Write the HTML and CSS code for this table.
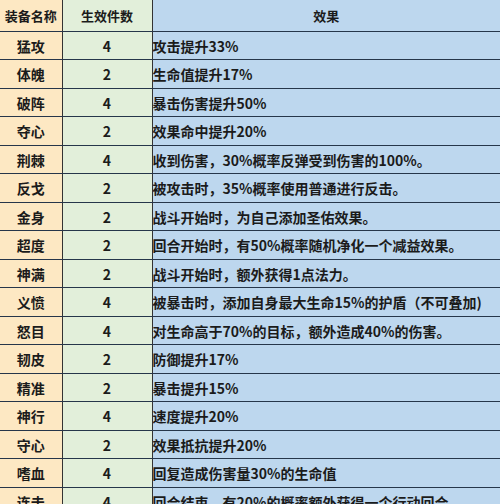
FILE: index.html
```html
<!DOCTYPE html>
<html lang="zh">
<head>
<meta charset="utf-8">
<link rel="stylesheet" href="styles.css">
</head>
<body>
<table class="gear">
  <colgroup><col class="c-name"><col class="c-num"><col class="c-eff"></colgroup>
  <thead>
    <tr><th class="name">装备名称</th><th class="num">生效件数</th><th class="eff">效果</th></tr>
  </thead>
  <tbody>
    <tr><td class="name">猛攻</td><td class="num">4</td><td class="eff">攻击提升33%</td></tr>
    <tr><td class="name">体魄</td><td class="num">2</td><td class="eff">生命值提升17%</td></tr>
    <tr><td class="name">破阵</td><td class="num">4</td><td class="eff">暴击伤害提升50%</td></tr>
    <tr><td class="name">夺心</td><td class="num">2</td><td class="eff">效果命中提升20%</td></tr>
    <tr><td class="name">荆棘</td><td class="num">4</td><td class="eff">收到伤害，30%概率反弹受到伤害的100%。</td></tr>
    <tr><td class="name">反戈</td><td class="num">2</td><td class="eff">被攻击时，35%概率使用普通进行反击。</td></tr>
    <tr><td class="name">金身</td><td class="num">2</td><td class="eff">战斗开始时，为自己添加圣佑效果。</td></tr>
    <tr><td class="name">超度</td><td class="num">2</td><td class="eff">回合开始时，有50%概率随机净化一个减益效果。</td></tr>
    <tr><td class="name">神满</td><td class="num">2</td><td class="eff">战斗开始时，额外获得1点法力。</td></tr>
    <tr><td class="name">义愤</td><td class="num">4</td><td class="eff">被暴击时，添加自身最大生命15%的护盾（不可叠加)</td></tr>
    <tr><td class="name">怒目</td><td class="num">4</td><td class="eff">对生命高于70%的目标，额外造成40%的伤害。</td></tr>
    <tr><td class="name">韧皮</td><td class="num">2</td><td class="eff">防御提升17%</td></tr>
    <tr><td class="name">精准</td><td class="num">2</td><td class="eff">暴击提升15%</td></tr>
    <tr><td class="name">神行</td><td class="num">4</td><td class="eff">速度提升20%</td></tr>
    <tr><td class="name">守心</td><td class="num">2</td><td class="eff">效果抵抗提升20%</td></tr>
    <tr><td class="name">嗜血</td><td class="num">4</td><td class="eff">回复造成伤害量30%的生命值</td></tr>
    <tr><td class="name">连击</td><td class="num">4</td><td class="eff">回合结束，有20%的概率额外获得一个行动回合。</td></tr>
  </tbody>
</table>
</body>
</html>
```
FILE: styles.css
```css
html, body {
  margin: 0;
  padding: 0;
  background: #ffffff;
  overflow: hidden;
}
.gear {
  width: 500px;
  table-layout: fixed;
  border-collapse: collapse;
  font-family: "Microsoft YaHei", "Noto Sans CJK SC", "Noto Sans", sans-serif;
  font-weight: bold;
  font-size: 14px;
  color: #1b1b1b;
}
.c-name { width: 62px; }
.c-num { width: 90px; }
.c-eff { width: 348px; }
.gear th, .gear td {
  padding: 0;
  height: 27px;
  line-height: 18px;
  border-bottom: 1px solid #26364a;
  border-right: 1px solid #333333;
  white-space: nowrap;
  overflow: hidden;
}
.gear th {
  height: 31px;
  font-size: 13px;
  font-weight: bold;
}
.gear tbody tr:nth-child(even) td { height: 28px; }
.gear .eff { border-right: none; }
.name { background: #fde8c3; text-align: center; }
.num { background: #e2efda; text-align: center; }
.eff { background: #bdd7ee; text-align: left; padding-left: 2px; }
.gear th.eff { text-align: center; }
```
